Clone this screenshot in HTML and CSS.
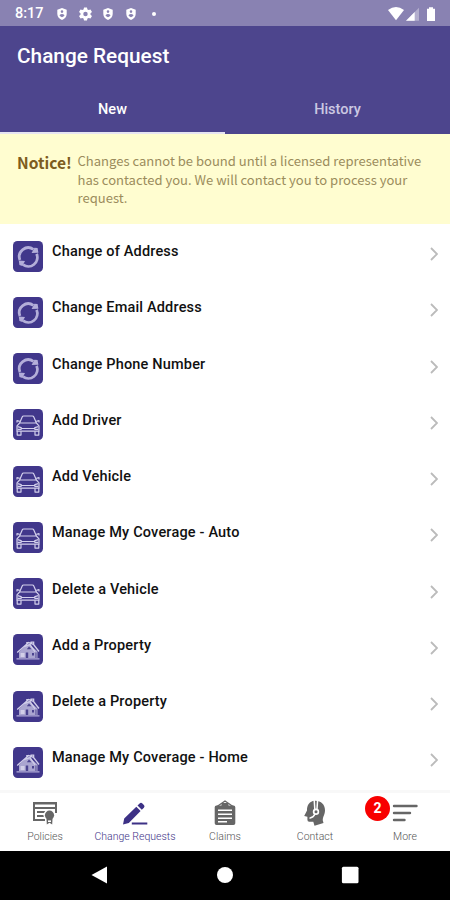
FILE: index.html
```html
<!DOCTYPE html>
<html lang="en">
<head>
  <meta charset="UTF-8">
  <meta name="viewport" content="width=device-width, initial-scale=1.0">
  <title>Change Request</title>
  <link rel="stylesheet" href="styles.css">
</head>
<body>
  <!-- Shared icons -->
  <svg class="sprite">
    <symbol id="shield" viewBox="0 0 10 12">
      <path fill="#fff" d="M5 0L9.7 1.8V6C9.7 8.8 7.6 11 5 12C2.4 11 .3 8.8 .3 6V1.8Z"/>
      <path fill="#8982b2" d="M5 2.3a1.3 1.3 0 1 1 0 2.6a1.3 1.3 0 0 1 0-2.6M2.4 7.2Q5 4.9 7.6 7.2Q6.6 8.8 5 9.2Q3.4 8.8 2.4 7.2"/>
    </symbol>
    <symbol id="sync" viewBox="0 0 30 30">
      <g fill="none" stroke="#b3aed9" stroke-width="2.8">
        <path d="M6.9 18.4A9 9 0 0 1 20.4 7.8"/>
        <path d="M23.6 12.4A9 9 0 0 1 10 23.2"/>
      </g>
      <path fill="#b3aed9" d="M18.6 11.6L25.4 11.2L24.6 6.6L21.4 6.2ZM12 19.6L5.8 19L6.4 23.4L9.4 24.6Z"/>
    </symbol>
    <symbol id="car" viewBox="0 0 30 30">
      <g fill="none" stroke="#d3d0ec" stroke-width="1.2" stroke-linejoin="round">
        <path d="M6.6 13.5L9.2 7.4Q9.6 6.5 10.6 6.5H19.4Q20.4 6.5 20.8 7.4L23.4 13.5M6.6 13.5H23.4L26 16.3V21.6H4V16.3Z"/>
        <path d="M6.8 11.8L4 11.2V13M23.2 11.8L26 11.2V13M4.2 21.6V25.6H8V21.8M22 21.8V25.6H25.8V21.6M8.4 19H21.6M4.6 17.2L8.2 18.2V19.8H4.6M25.4 17.2L21.8 18.2V19.8H25.4"/>
      </g>
    </symbol>
    <symbol id="house" viewBox="0 0 30 30">
      <path fill="#aaa5d0" d="M6 17.5L12.4 11.5L16 9.5L24.5 17V23.6H6Z"/>
      <path fill="none" stroke="#cfcce8" stroke-width="1.4" d="M4.2 18L15.6 8L20.4 9.8L26 17M11 12.2L17 10.2L22 17.4M13.2 8.3H16M18.2 9.4V7.6H20.6V10"/>
      <path fill="#4b438f" d="M12.8 18H15.2V23.5H12.8ZM19 18.4H21V21H19ZM22.5 18H23.4V23.5H22.5ZM16 12L18.5 14.8H13.8Z"/>
      <path fill="#d2cfe8" d="M7.6 18.5H11.6V22.5H7.6Z"/>
      <path fill="#b3aed9" d="M3.5 23.8H26.5V25H3.5Z"/>
    </symbol>
    <symbol id="chevron" viewBox="0 0 8 14">
      <path fill="none" stroke="#bbb" stroke-width="1.8" d="M1 1L7 7L1 13"/>
    </symbol>
  </svg>

  <div class="screen">
    <!-- Status bar -->
    <div class="status-bar">
      <span class="time">8:17</span>
      <svg class="shield first"><use href="#shield"/></svg>
      <svg class="gear" viewBox="0 0 14 14">
        <path fill="#fff" d="M5.4 0H8.6L9.1 2.1L10.4 2.8L12.4 2.1L14 4.9L12.4 6.3V7.7L14 9.1L12.4 11.9L10.4 11.2L9.1 11.9L8.6 14H5.4L4.9 11.9L3.6 11.2L1.6 11.9L0 9.1L1.6 7.7V6.3L0 4.9L1.6 2.1L3.6 2.8L4.9 2.1Z"/>
        <circle cx="7" cy="7" r="2.4" fill="#8982b2"/>
      </svg>
      <svg class="shield"><use href="#shield"/></svg>
      <svg class="shield"><use href="#shield"/></svg>
      <span class="dot"></span>
      <svg class="signals" viewBox="0 0 48 14">
        <path fill="#fff" d="M0 3Q8 -3 16 3L8 13.3Z"/>
        <path fill="#b3aecd" d="M31 .7V13.7H18Z"/>
        <path fill="#fff" d="M26.7 5V13.7H18Z"/>
        <path fill="#fff" d="M39 1.8H41V.3H45V1.8H47V14H39Z"/>
      </svg>
    </div>

    <!-- Header and tabs -->
    <header class="header">
      <h1>Change Request</h1>
      <div class="tabs">
        <div class="tab active">New</div>
        <div class="tab">History</div>
      </div>
    </header>

    <div class="notice">
      <strong>Notice!</strong>
      <p>Changes cannot be bound until a licensed representative<br>has contacted you. We will contact you to process your<br>request.</p>
    </div>

    <!-- Request types -->
    <ul class="list">
      <li><svg class="tile"><use href="#sync"/></svg><span>Change of Address</span><svg class="chevron"><use href="#chevron"/></svg></li>
      <li><svg class="tile"><use href="#sync"/></svg><span>Change Email Address</span><svg class="chevron"><use href="#chevron"/></svg></li>
      <li><svg class="tile"><use href="#sync"/></svg><span>Change Phone Number</span><svg class="chevron"><use href="#chevron"/></svg></li>
      <li><svg class="tile"><use href="#car"/></svg><span>Add Driver</span><svg class="chevron"><use href="#chevron"/></svg></li>
      <li><svg class="tile"><use href="#car"/></svg><span>Add Vehicle</span><svg class="chevron"><use href="#chevron"/></svg></li>
      <li><svg class="tile"><use href="#car"/></svg><span>Manage My Coverage - Auto</span><svg class="chevron"><use href="#chevron"/></svg></li>
      <li><svg class="tile"><use href="#car"/></svg><span>Delete a Vehicle</span><svg class="chevron"><use href="#chevron"/></svg></li>
      <li><svg class="tile"><use href="#house"/></svg><span>Add a Property</span><svg class="chevron"><use href="#chevron"/></svg></li>
      <li><svg class="tile"><use href="#house"/></svg><span>Delete a Property</span><svg class="chevron"><use href="#chevron"/></svg></li>
      <li><svg class="tile"><use href="#house"/></svg><span>Manage My Coverage - Home</span><svg class="chevron"><use href="#chevron"/></svg></li>
    </ul>

    <!-- Bottom tab bar -->
    <nav class="bottom-nav">
      <div class="nav-item">
        <svg viewBox="0 0 26 26">
          <path fill="none" stroke="#666" stroke-width="2" d="M13 20H2V3H24V13M2 8H24M5 12H14M5 16H12"/>
          <path fill="#666" d="M1 2H25V4.5H1Z"/>
          <circle cx="17.5" cy="15.2" r="6" fill="#fff"/>
          <circle cx="17.5" cy="15.2" r="4.6" fill="#666"/>
          <path fill="#666" d="M14.5 19L14.8 24.5L17.5 22.8L20.2 24.5L20.5 19Z"/>
          <path fill="#fff" d="M16 20.4H19V22H16Z"/>
        </svg>
        <span>Policies</span>
      </div>
      <div class="nav-item active">
        <svg viewBox="0 0 26 26">
          <path fill="#3d3186" d="M1 24.5L2.2 18.5L14.3 6.8L18.6 11L6.8 22.9ZM15.5 5.6L17.6 3.5Q19 2.2 20.4 3.5L21.9 5Q23.2 6.4 21.9 7.7L19.8 9.8ZM9.8 22.6H25.3V24.6H9.8Z"/>
        </svg>
        <span>Change Requests</span>
      </div>
      <div class="nav-item">
        <svg viewBox="0 0 26 26">
          <path fill="none" stroke="#666" stroke-width="1.4" d="M5 6.5L13 1L21 6.5"/>
          <path fill="#666" d="M4.5 5.5H21.5Q23.3 5.5 23.3 7.3V23.2Q23.3 25 21.5 25H4.5Q2.7 25 2.7 23.2V7.3Q2.7 5.5 4.5 5.5ZM9.5 3H16.5V7H9.5Z"/>
          <path stroke="#fff" stroke-width="1.5" d="M6 10.2H20M6 14.2H20M6 18.2H20M6 21.8H15"/>
        </svg>
        <span>Claims</span>
      </div>
      <div class="nav-item">
        <svg viewBox="0 0 26 26">
          <path fill="#666" d="M12.5 .8C19 .5 23 4.6 23 10.2C23 14.8 20.6 16.6 20.8 20.5L21.5 23L12.5 25.8L11.3 21.7H7.2Q5.4 21.7 5.4 19.8V16.8L2.2 16L5 10.5C4.8 5 7.8 1.3 12.5 .8Z"/>
          <path fill="none" stroke="#fff" stroke-width="1.5" d="M12.2 0L12.8 9M13 14Q11.4 17.6 7.5 18.2M15.6 0L15 9"/>
          <circle cx="14" cy="11.8" r="3.2" fill="#fff"/>
          <circle cx="14" cy="11.8" r="1.5" fill="#666"/>
        </svg>
        <span>Contact</span>
      </div>
      <div class="nav-item">
        <svg viewBox="0 0 26 26">
          <path stroke="#666" stroke-width="2.4" stroke-linecap="round" d="M2 6H24.5M2 13H18M2 20H12.5"/>
        </svg>
        <span>More</span>
        <b class="badge">2</b>
      </div>
    </nav>

    <!-- Android buttons -->
    <div class="system-nav">
      <div><svg viewBox="0 0 18 18"><path fill="#fff" d="M.5 9L16 .4V17.6Z"/></svg></div>
      <div><svg viewBox="0 0 18 18"><circle cx="9" cy="9" r="8" fill="#fff"/></svg></div>
      <div><svg viewBox="0 0 18 18"><rect x=".9" y=".7" width="16.6" height="16.6" rx="1.5" fill="#fff"/></svg></div>
    </div>
  </div>
</body>
</html>
```
FILE: styles.css
```css
* {
  box-sizing: border-box;
}

body {
  margin: 0;
  font-family: Roboto, sans-serif;
  background-color: #fff;
}

.sprite {
  display: none;
}

.screen {
  display: flex;
  flex-direction: column;
  width: 450px;
  height: 900px;
  overflow: hidden;
}

/* Status bar */
.status-bar {
  display: flex;
  align-items: center;
  height: 26px;
  padding: 1px 14px 0 15px;
  background-color: #8982b2;
  color: #fff;
}

.time {
  width: 42px;
  font-size: 14.5px;
  font-weight: 500;
}

.shield {
  width: 10px;
  height: 12px;
  margin-right: 13px;
}

.shield.first {
  margin-right: 12px;
}

.gear {
  width: 13px;
  height: 14px;
  margin-right: 11px;
}

.dot {
  width: 4px;
  height: 4px;
  margin-left: 3px;
  border-radius: 50%;
  background-color: #fff;
}

.signals {
  width: 48px;
  height: 14px;
  margin-left: auto;
}

/* Header */
.header {
  height: 108px;
  background-color: #4d458d;
  color: #fff;
}

h1 {
  height: 60px;
  margin: 0;
  padding-left: 17px;
  font-size: 20.8px;
  font-weight: 500;
  line-height: 60px;
}

.tabs {
  display: flex;
  height: 48px;
}

.tab {
  flex: 1;
  font-size: 14.5px;
  font-weight: 500;
  line-height: 48px;
  text-align: center;
  color: #cbc8e2;
}

.tab.active {
  color: #fff;
  border-bottom: 2px solid #e6e4f2;
}

/* Notice */
.notice {
  display: flex;
  height: 90px;
  padding: 18px 17px 0;
  background-color: #fffdd0;
  font-family: "Noto Sans CJK SC", sans-serif;
  color: #9b8c5c;
}

.notice strong {
  flex: 0 0 60.5px;
  font-size: 15.6px;
  line-height: 20px;
  color: #7d5c20;
}

.notice p {
  margin: 0;
  font-size: 13.06px;
  line-height: 18.5px;
  white-space: nowrap;
}

/* List */
.list {
  height: 566px;
  margin: 0;
  padding: 4px 12px 0 13px;
  list-style: none;
}

.list li {
  display: flex;
  align-items: center;
  height: 56.25px;
}

.tile {
  width: 30px;
  height: 31px;
  border-radius: 4.5px;
  background-color: #41378b;
}

.list span {
  flex: 1;
  padding: 0 0 9px 9px;
  font-size: 14.5px;
  font-weight: 500;
  letter-spacing: 0.18px;
  color: #111;
}

.chevron {
  width: 8px;
  height: 14px;
  margin-bottom: 4px;
}

/* Bottom tab bar */
.bottom-nav {
  display: flex;
  height: 61px;
  border-top: 3px solid #f8f8f8;
}

.nav-item {
  position: relative;
  flex: 1;
  display: flex;
  flex-direction: column;
  align-items: center;
  padding-top: 7px;
  font-size: 10.5px;
  font-weight: 300;
  color: #555;
}

.nav-item svg {
  width: 26px;
  height: 26px;
}

.nav-item span {
  margin-top: 4px;
  line-height: 13px;
  white-space: nowrap;
}

.nav-item.active {
  color: #3d3186;
}

.badge {
  position: absolute;
  top: 3px;
  left: 5px;
  width: 25px;
  height: 25px;
  border-radius: 50%;
  background-color: #f80000;
  font-size: 14px;
  font-weight: 700;
  line-height: 25px;
  text-align: center;
  color: #fff;
}

/* Android buttons */
.system-nav {
  display: flex;
  justify-content: space-between;
  height: 49px;
  padding: 15px 91px 0;
  background-color: #000;
}

.system-nav svg {
  display: block;
  width: 18px;
  height: 18px;
}
```
